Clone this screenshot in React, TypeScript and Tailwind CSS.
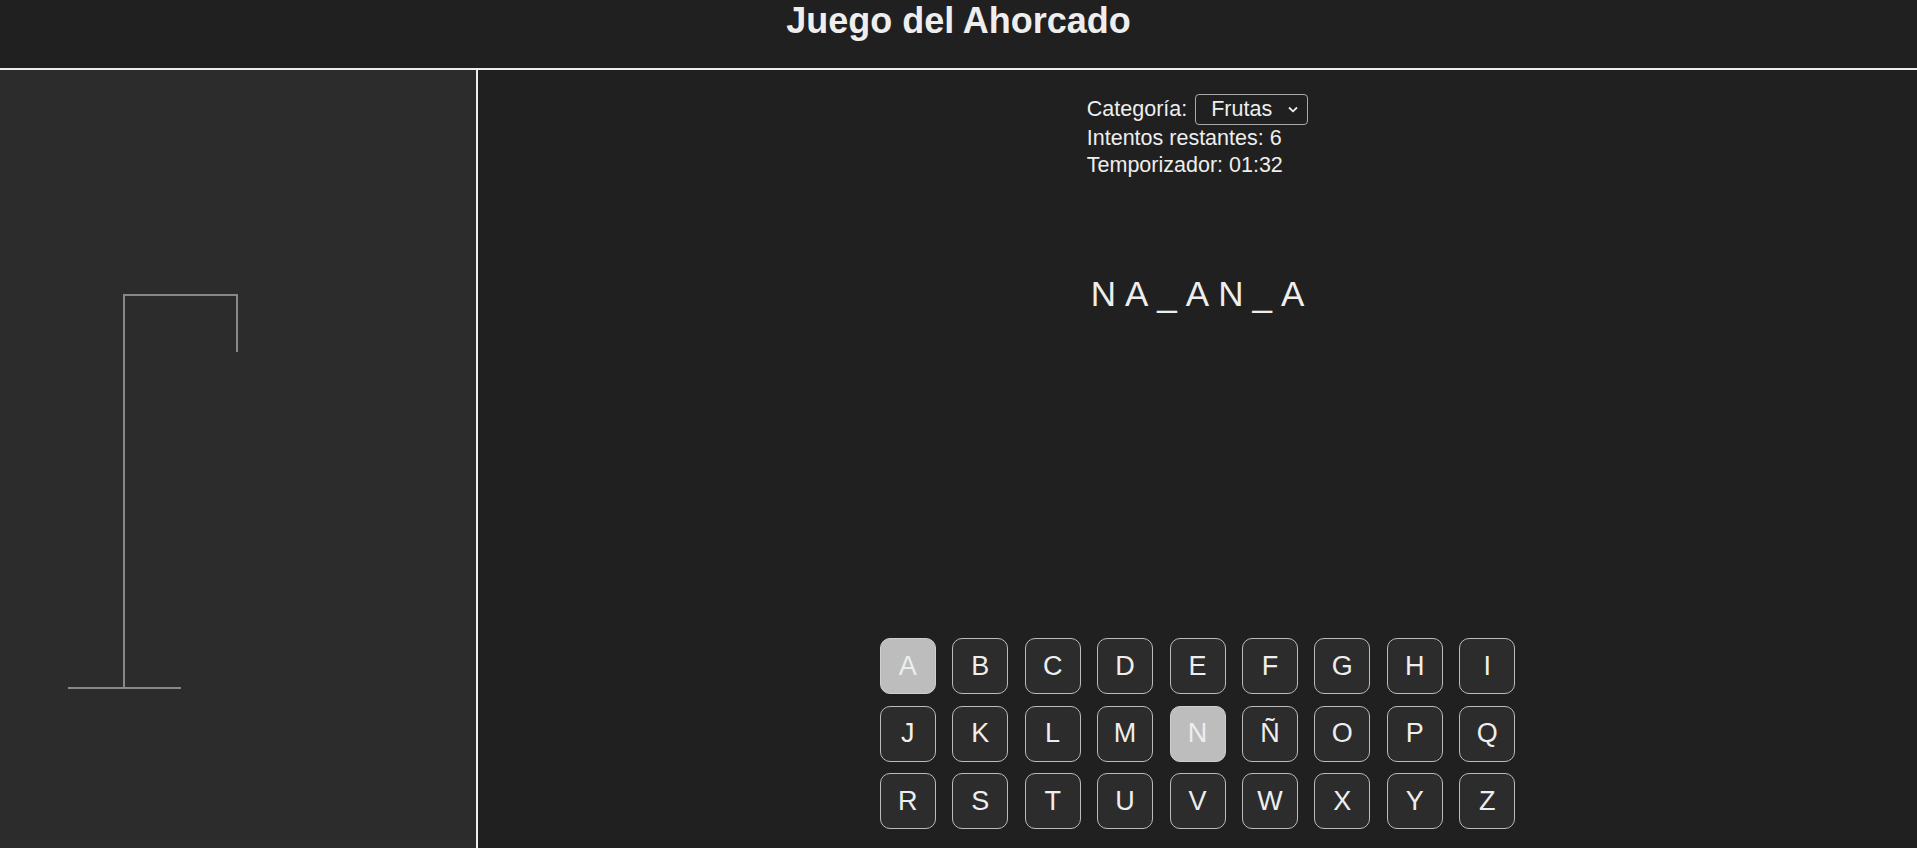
import { useState } from 'react'

const letters = 'ABCDEFGHIJKLMNÑOPQRSTUVWXYZ'.split('')

function Gallows() {
  // only the frame is drawn at 6 remaining attempts
  return (
    <svg width="476" height="778" viewBox="0 0 476 778" className="block">
      <g stroke="#888" strokeWidth="2" fill="none" strokeLinecap="butt">
        <line x1="68" y1="618" x2="181" y2="618" />
        <line x1="124" y1="618" x2="124" y2="225" />
        <line x1="123" y1="225" x2="238" y2="225" />
        <line x1="237" y1="225" x2="237" y2="282" />
      </g>
    </svg>
  )
}

export default function App() {
  const [guessed] = useState<string[]>(['A', 'N'])
  const word = 'NA_AN_A'

  return (
    <div className="h-[848px] overflow-hidden bg-[#202020] text-[#eee] font-['Liberation_Sans',Arial,sans-serif]">
      {/* Header */}
      <header className="h-[70px] border-b-2 border-[#eee]">
        <h1 className="text-center text-[36px] font-bold leading-[41px]">Juego del Ahorcado</h1>
      </header>

      <div className="flex h-[778px]">
        {/* Hangman drawing */}
        <aside className="w-[478px] shrink-0 border-r-2 border-[#eee] bg-[#2c2c2c]">
          <Gallows />
        </aside>

        {/* Game area */}
        <main className="flex-1 flex flex-col items-center">
          <div className="mt-[23px] text-[21.5px] leading-[26.5px]">
            <div className="flex items-center h-[32px]">
              <span>Categoría:</span>
              <div className="ml-[8px] w-[113px] h-[31px] flex items-center justify-between border border-[#aaa] rounded-[4px] pl-[15px] pr-[9px]">
                <span>Frutas</span>
                <svg width="10" height="7" viewBox="0 0 10 7" fill="none">
                  <path d="M1 1.5L5 5.3L9 1.5" stroke="#eee" strokeWidth="1.8" />
                </svg>
              </div>
            </div>
            <div>Intentos restantes: 6</div>
            <div>Temporizador: 01:32</div>
          </div>

          <div className="mt-[96px] pl-[9px] text-[35px] leading-[40px] tracking-[9px]">{word}</div>

          <div className="mt-[324px] grid grid-cols-9 gap-x-[16.45px] gap-y-[11.5px]">
            {letters.map((l) => {
              const used = guessed.includes(l)
              return (
                <button
                  key={l}
                  disabled={used}
                  className={
                    used
                      ? 'w-[56px] h-[56px] rounded-[10px] border border-[#cfcfcf] bg-[#bdbdbd] text-[#eee] text-[27px]'
                      : 'w-[56px] h-[56px] rounded-[10px] border border-[#bbb] bg-[#2c2c2c] text-[#eee] text-[27px]'
                  }
                >
                  {l}
                </button>
              )
            })}
          </div>
        </main>
      </div>
    </div>
  )
}
